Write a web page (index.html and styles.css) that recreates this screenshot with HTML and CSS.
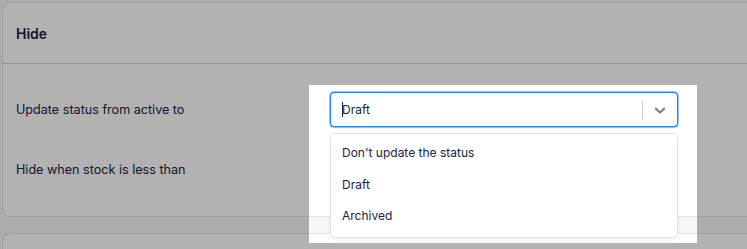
FILE: index.html
```html
<!DOCTYPE html>
<html lang="en">
<head>
    <meta charset="UTF-8">
    <meta name="viewport" content="width=device-width, initial-scale=1.0">
    <title>Hide settings</title>
    <link rel="stylesheet" href="styles.css">
</head>
<body>
<div class="page">
    <div class="card">
        <div class="card-head">Hide</div>
        <div class="card-body">
            <div class="row">
                <label class="label">Update status from active to</label>
                <div class="select">
                    <div class="control">
                        <div class="value"><span class="caret"></span>Draft</div>
                        <span class="sep"></span>
                        <span class="chevron">
                            <svg width="20" height="20" viewBox="0 0 20 20"><path d="M4.516 7.548c0.436-0.446 1.043-0.481 1.576 0l3.908 3.747 3.908-3.747c0.533-0.481 1.141-0.446 1.574 0 0.436 0.445 0.408 1.197 0 1.615-0.406 0.418-4.695 4.502-4.695 4.502-0.217 0.223-0.502 0.335-0.787 0.335s-0.57-0.112-0.789-0.335c0 0-4.287-4.084-4.695-4.502s-0.436-1.170 0-1.615z" fill="#7a7a7a"/></svg>
                        </span>
                    </div>
                    <div class="menu">
                        <div class="option">Don't update the status</div>
                        <div class="option">Draft</div>
                        <div class="option">Archived</div>
                    </div>
                </div>
            </div>
            <div class="row">
                <label class="label">Hide when stock is less than</label>
                <input class="input" type="text" value="0">
            </div>
        </div>
    </div>
    <div class="card card-next"></div>
</div>
<div class="spotlight"></div>
</body>
</html>
```

FILE: styles.css
```css
*{
    margin: 0;
    padding: 0;
    box-sizing: border-box;
}
body{
    background: #f7f7f7;
    font-family: Inter, "Noto Sans", sans-serif;
    color: #202142;
    overflow: hidden;
    height: 249px;
}
.page{
    padding: 2px 0 0 2px;
    display: flex;
    flex-direction: column;
    gap: 16px;
    width: 770px;
}
.card{
    background: #fff;
    border: 1px solid #e2e2e4;
    border-radius: 8px;
}
.card-head{
    height: 61px;
    padding: 0 13px;
    display: flex;
    align-items: center;
    font-size: 14px;
    font-weight: 600;
    border-bottom: 1px solid #d4d4d6;
}
.card-body{
    padding: 28px 13px 29px;
    display: flex;
    flex-direction: column;
    gap: 25px;
}
.row{
    display: grid;
    grid-template-columns: 314px 348px;
    align-items: center;
    height: 35px;
}
.label{
    font-size: 12.6px;
}
.select{
    position: relative;
    z-index: 20;
}
.control{
    height: 35px;
    border: 1px solid #2684ff;
    box-shadow: 0 0 0 0.5px #2684ff;
    border-radius: 4px;
    display: flex;
    align-items: center;
    background: #fff;
}
.value{
    flex: 1;
    padding-left: 11px;
    font-size: 12px;
    display: flex;
    align-items: center;
}
.caret{
    width: 1px;
    height: 15px;
    background: #202142;
    margin-right: -1px;
}
.sep{
    width: 1px;
    height: 18px;
    background: #cfcfcf;
}
.chevron{
    width: 34px;
    display: flex;
    justify-content: center;
    align-items: center;
}
.chevron svg{
    width: 18px;
    height: 18px;
}
.menu{
    position: absolute;
    top: 41px;
    left: 0;
    width: 100%;
    background: #fff;
    border: 1px solid #e3e3e5;
    border-radius: 4px;
    box-shadow: 0 2px 4px rgba(0,0,0,0.06);
    padding: 3px 0 5px;
}
.option{
    height: 31.5px;
    padding: 0 11px;
    display: flex;
    align-items: center;
    font-size: 12px;
}
.input{
    height: 35px;
    border: 1px solid #d4d4d6;
    border-radius: 4px;
    padding: 0 11px;
    font: inherit;
    font-size: 12px;
}
.card-next{
    height: 60px;
}
.spotlight{
    position: absolute;
    left: 309px;
    top: 85px;
    width: 388px;
    height: 158px;
    box-shadow: 0 0 0 2000px rgba(0,0,0,0.3);
    z-index: 10;
}
```
